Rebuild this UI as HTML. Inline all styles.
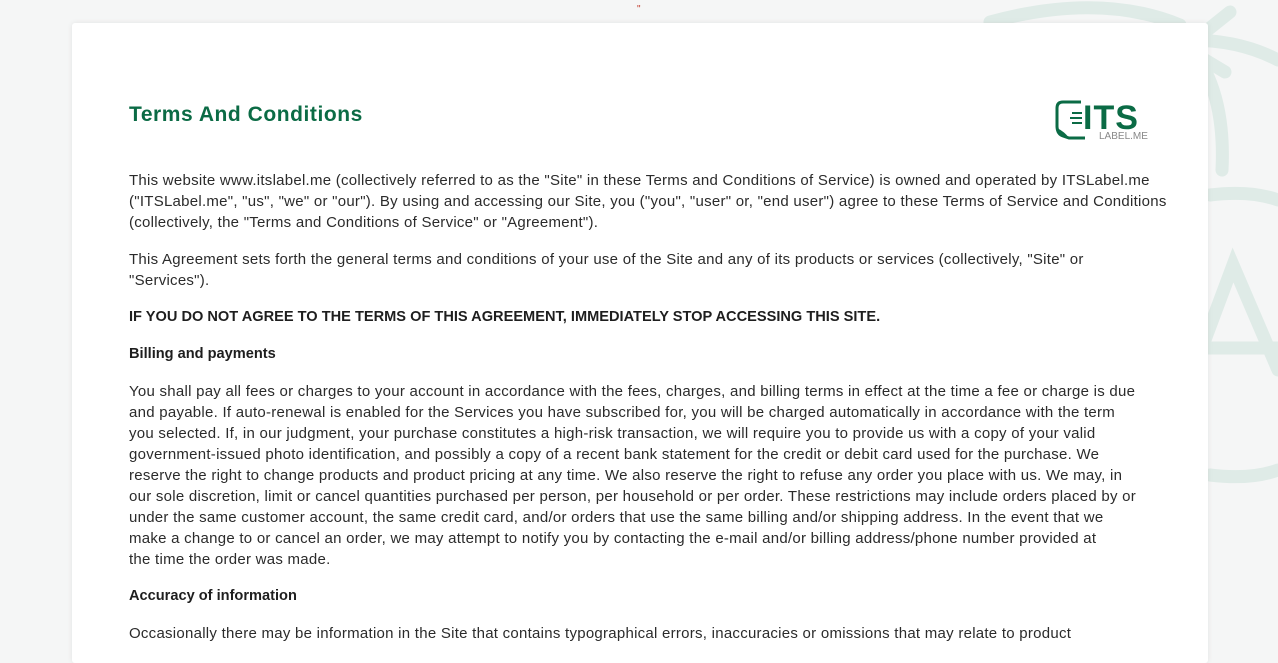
<!DOCTYPE html>
<html><head><meta charset="utf-8"><style>
html,body{margin:0;padding:0;width:1278px;height:633px;overflow:hidden;background:#f5f6f6;font-family:"Liberation Sans",sans-serif}
svg.bg{position:absolute;left:0;top:0}
.card{position:absolute;left:72px;top:23px;width:1136px;height:640px;background:#fff;box-shadow:0 0 6px rgba(0,0,0,.08);border-radius:3px}
h1{position:absolute;left:57px;top:80px;margin:0;font-size:21px;font-weight:bold;color:#0b6b45;letter-spacing:.55px}
.t{position:absolute;left:57px;font-size:15px;color:#2b2b2b;white-space:nowrap;line-height:21px;letter-spacing:.26px}
.b{font-weight:bold;color:#1e1e1e;letter-spacing:0;font-size:14.6px}
.logo{position:absolute;left:983px;top:75px}
</style></head><body>
<svg class="bg" width="1278" height="633">
<g fill="none" stroke="#dfebe7" stroke-width="13" stroke-linecap="round">
<path d="M990 22 Q1100 -8 1180 25"/>
<path d="M1230 12 L1185 48 L1225 72"/>
<path d="M1190 40 Q1240 40 1278 60"/>
<path d="M1205 70 Q1225 110 1222 170"/>
<path d="M1210 195 Q1250 190 1278 200"/>
<path d="M1210 475 Q1250 480 1278 470"/>
<path d="M1205 340 L1233 265 L1278 370"/>
<path d="M1205 348 L1278 348"/>
</g>
<text x="637" y="12" font-size="10" fill="#c0392b" font-family="Liberation Sans">"</text>
</svg>
<div class="card">
<h1>Terms And Conditions</h1>
<svg class="logo" width="100" height="45" viewBox="0 0 100 45">
<path d="M26 4 H8 Q2 4 2 10 V28 Q2 36 8 38 L14 40 H30" fill="none" stroke="#0b6b45" stroke-width="3"/>
<path d="M2 30 Q4 40 14 40 Q10 34 2 30Z" fill="#0b6b45"/>
<path d="M17 15 H27 M15 20 H27 M17 25 H27" stroke="#0b6b45" stroke-width="2"/>
<text x="28" y="31" font-size="34" font-weight="bold" fill="#0b6b45" font-family="Liberation Sans" letter-spacing="1">ITS</text>
<text x="44" y="41" font-size="10" fill="#888" font-family="Liberation Sans">LABEL.ME</text>
</svg>
<div class="t" style="top:147px">This website www.itslabel.me (collectively referred to as the "Site" in these Terms and Conditions of Service) is owned and operated by ITSLabel.me<br>("ITSLabel.me", "us", "we" or "our"). By using and accessing our Site, you ("you", "user" or, "end user") agree to these Terms of Service and Conditions<br>(collectively, the "Terms and Conditions of Service" or "Agreement").</div>
<div class="t" style="top:226px">This Agreement sets forth the general terms and conditions of your use of the Site and any of its products or services (collectively, "Site" or<br>"Services").</div>
<div class="t b" style="top:284px">IF YOU DO NOT AGREE TO THE TERMS OF THIS AGREEMENT, IMMEDIATELY STOP ACCESSING THIS SITE.</div>
<div class="t b" style="top:321px">Billing and payments</div>
<div class="t" style="top:358px">You shall pay all fees or charges to your account in accordance with the fees, charges, and billing terms in effect at the time a fee or charge is due<br>and payable. If auto-renewal is enabled for the Services you have subscribed for, you will be charged automatically in accordance with the term<br>you selected. If, in our judgment, your purchase constitutes a high-risk transaction, we will require you to provide us with a copy of your valid<br>government-issued photo identification, and possibly a copy of a recent bank statement for the credit or debit card used for the purchase. We<br>reserve the right to change products and product pricing at any time. We also reserve the right to refuse any order you place with us. We may, in<br>our sole discretion, limit or cancel quantities purchased per person, per household or per order. These restrictions may include orders placed by or<br>under the same customer account, the same credit card, and/or orders that use the same billing and/or shipping address. In the event that we<br>make a change to or cancel an order, we may attempt to notify you by contacting the e-mail and/or billing address/phone number provided at<br>the time the order was made.</div>
<div class="t b" style="top:563px">Accuracy of information</div>
<div class="t" style="top:600px">Occasionally there may be information in the Site that contains typographical errors, inaccuracies or omissions that may relate to product</div>
</div>
</body></html>
